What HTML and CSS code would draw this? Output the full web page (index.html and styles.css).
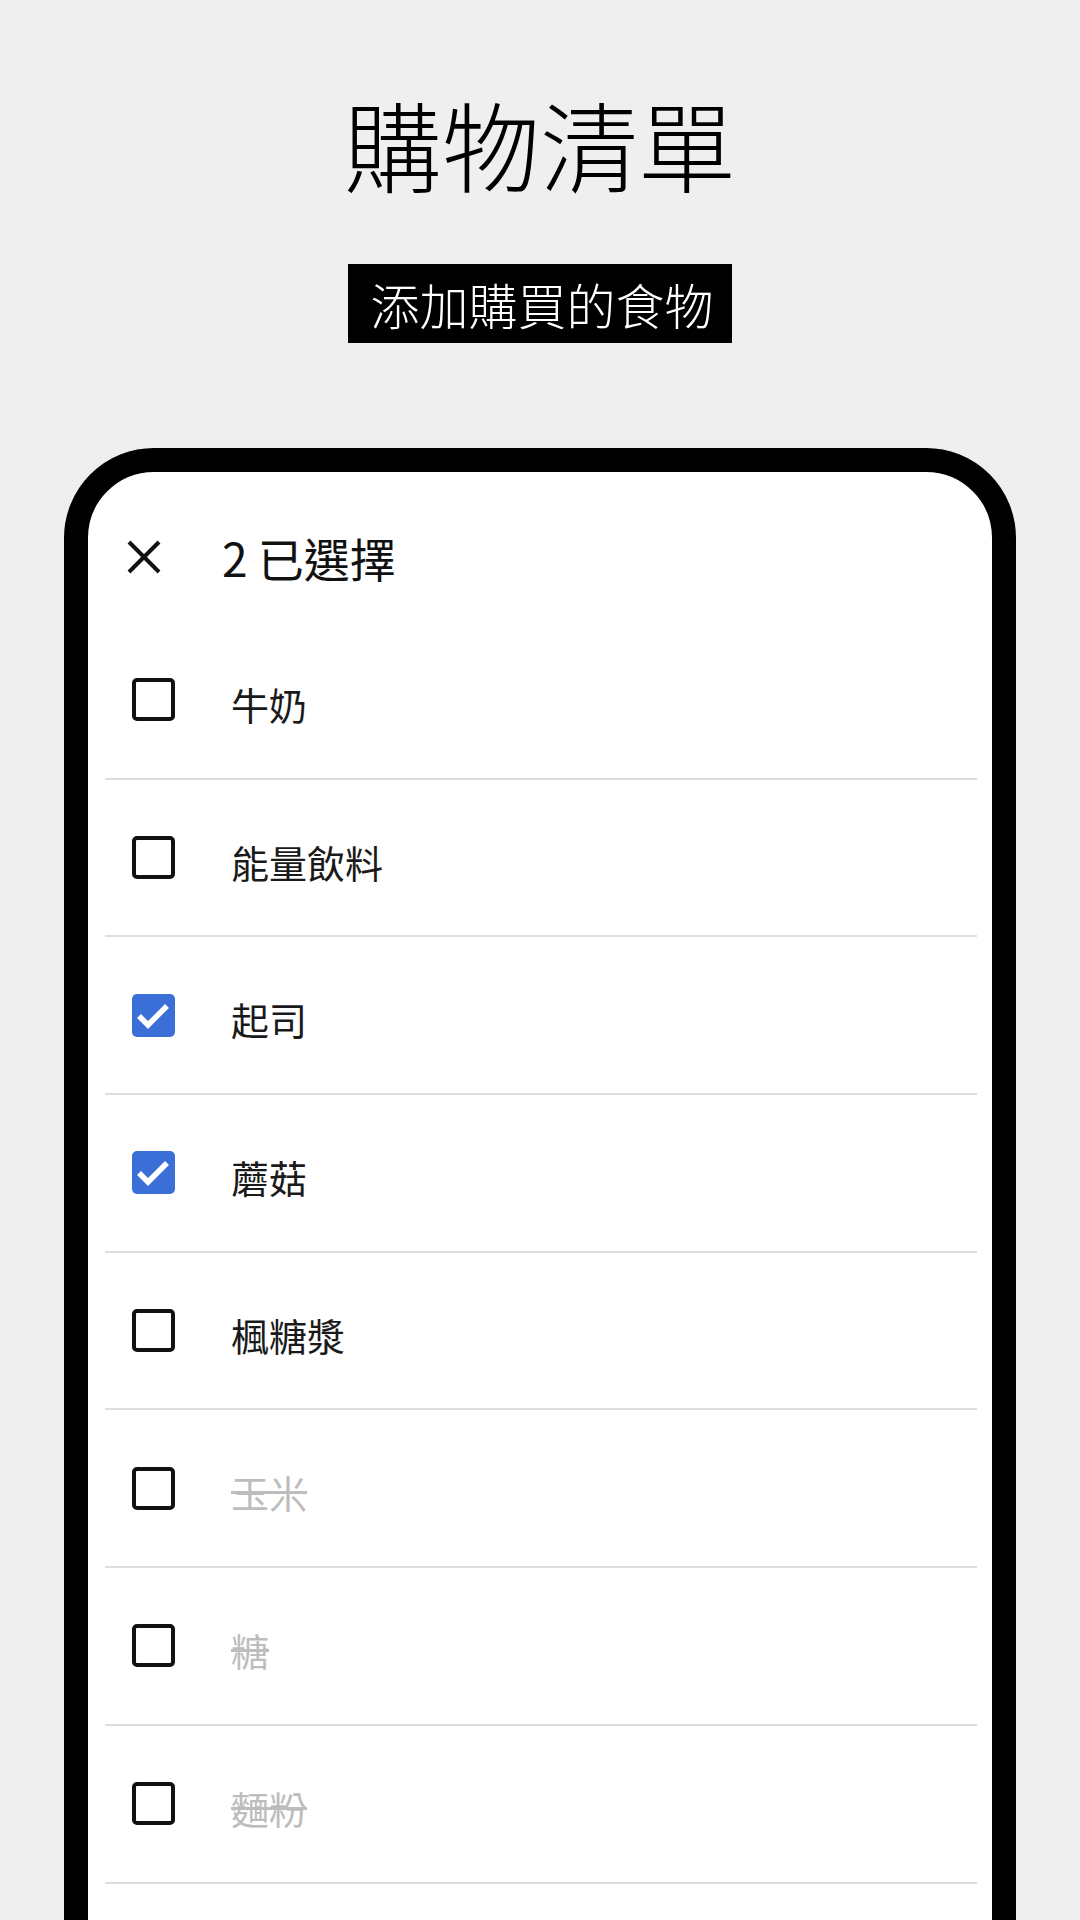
FILE: index.html
```html
<!DOCTYPE html>
<html lang="zh-Hant">
<head>
    <meta charset="UTF-8">
    <meta name="viewport" content="width=device-width, initial-scale=1.0">
    <title>購物清單</title>
    <link rel="stylesheet" href="styles.css">
</head>
<body>
    <div class="hero">
        <h1>購物清單</h1>
        <p class="tagline">添加購買的食物</p>
    </div>

    <div class="phone">
        <div class="toolbar">
            <svg class="close" width="34" height="34" viewBox="0 0 34 34">
                <path d="M2 2 L32 32 M32 2 L2 32" stroke="#111" stroke-width="4" fill="none"/>
            </svg>
            <span class="count">2 已選擇</span>
        </div>

        <ul class="list">
            <li class="item"><span class="box"></span><span class="name">牛奶</span></li>
            <li class="item"><span class="box"></span><span class="name">能量飲料</span></li>
            <li class="item">
                <span class="box checked">
                    <svg width="43" height="43" viewBox="0 0 43 43"><path d="M7 22 L16 31 L35 12" stroke="#fff" stroke-width="5.5" fill="none"/></svg>
                </span>
                <span class="name">起司</span>
            </li>
            <li class="item">
                <span class="box checked">
                    <svg width="43" height="43" viewBox="0 0 43 43"><path d="M7 22 L16 31 L35 12" stroke="#fff" stroke-width="5.5" fill="none"/></svg>
                </span>
                <span class="name">蘑菇</span>
            </li>
            <li class="item"><span class="box"></span><span class="name">楓糖漿</span></li>
            <li class="item done"><span class="box"></span><span class="name">玉米</span></li>
            <li class="item done"><span class="box"></span><span class="name">糖</span></li>
            <li class="item done"><span class="box"></span><span class="name">麵粉</span></li>
        </ul>
    </div>
</body>
</html>
```

FILE: styles.css
```css
/* General Styles */
body {
    margin: 0;
    height: 1920px;
    overflow: hidden;
    background: #efefef;
    font-family: 'Noto Sans CJK TC', 'Noto Sans', sans-serif;
    color: #111;
}

.hero {
    padding-top: 93px;
    text-align: center;
}

h1 {
    margin: 0;
    font-size: 98px;
    font-weight: 300;
    line-height: 98px;
    color: #000;
}

.tagline {
    display: inline-block;
    margin: 73px 0 0;
    padding: 0 18px 0 22px;
    background: #000;
    color: #fff;
    font-size: 49px;
    font-weight: 300;
    line-height: 79px;
}

/* Phone frame */
.phone {
    width: 952px;
    height: 1600px;
    margin: 105px auto 0;
    box-sizing: border-box;
    border: 24px solid #000;
    border-radius: 90px;
    background: #fff;
}

.toolbar {
    display: flex;
    align-items: center;
    height: 150px;
    box-sizing: border-box;
    padding: 20px 0 0 39px;
}

.close {
    flex-shrink: 0;
}

.count {
    margin-left: 61px;
    font-size: 46px;
    line-height: 1;
}

.list {
    list-style: none;
    margin: 0 15px 0 17px;
    padding: 0;
}

.item {
    display: flex;
    align-items: center;
    height: 155.7px;
    padding-left: 27px;
    border-bottom: 2px solid #dedede;
}

.box {
    flex-shrink: 0;
    width: 43px;
    height: 43px;
    box-sizing: border-box;
    border: 4px solid #111;
    border-radius: 5px;
}

.box.checked {
    border: none;
    background: #3a6fd8;
}

.box svg {
    display: block;
}

.name {
    margin-left: 56px;
    padding-top: 8px;
    font-size: 38px;
    line-height: 1;
    color: #1a1a1a;
}

.item.done .name {
    color: #bdbdbd;
    text-decoration: line-through;
}
```
